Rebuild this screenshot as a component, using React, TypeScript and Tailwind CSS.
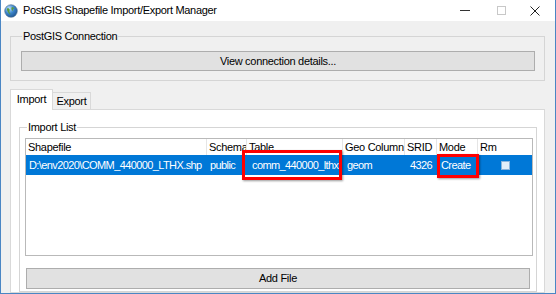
const font = { fontFamily: '"Liberation Sans", Arial, sans-serif' };

const Globe = () => (
  <svg width="14" height="14" viewBox="0 0 14 14">
    <defs>
      <radialGradient id="g" cx="0.35" cy="0.3" r="0.8">
        <stop offset="0" stopColor="#bfe3ff" />
        <stop offset="0.5" stopColor="#3b83c9" />
        <stop offset="1" stopColor="#1b4f8a" />
      </radialGradient>
    </defs>
    <circle cx="7" cy="7" r="6.3" fill="url(#g)" stroke="#4d6f8f" strokeWidth="0.6" />
    <path d="M3 4.5c1.2-.6 2.2 0 2.6 1 .3.9-.5 1.5-.2 2.4.3.8 1.2 1.3 1 2.3-.6.2-1.5-.6-2-1.5C3.8 7.6 2.6 6 3 4.5z" fill="#5a9a3c" />
    <path d="M8 3c1 .1 2.1.7 2.6 1.5-.5.4-1.2.1-1.6.6-.3.5.3 1.2-.2 1.6-.6.3-1-.6-1.2-1.2C7.4 4.8 7.4 3.7 8 3z" fill="#5a9a3c" />
  </svg>
);

const cols = ['Shapefile', 'Schema', 'Table', 'Geo Column', 'SRID', 'Mode', 'Rm'];

export default function App() {
  return (
    <div
      className="relative flex h-[294px] w-[556px] flex-col overflow-hidden border-x border-b border-[#4a86c4] bg-[#f0f0f0] text-[11px] tracking-[-0.3px] text-black"
      style={font}
    >
      {/* title bar */}
      <div className="flex h-[21px] shrink-0 items-center bg-white pl-[3px]">
        <Globe />
        <span className="ml-[5px] leading-none">PostGIS Shapefile Import/Export Manager</span>
        <div className="ml-auto flex h-full items-center">
          <div className="flex w-[36px] justify-center">
            <div className="h-px w-[10px] bg-[#333]" />
          </div>
          <div className="flex w-[36px] justify-center">
            <div className="h-[9px] w-[9px] border border-[#c8c8c8]" />
          </div>
          <div className="flex w-[36px] justify-center pr-[4px]">
            <svg width="10" height="10" viewBox="0 0 10 10">
              <path d="M0.5 0.5L9.5 9.5M9.5 0.5L0.5 9.5" stroke="#222" strokeWidth="1" />
            </svg>
          </div>
        </div>
      </div>

      {/* body */}
      <div className="flex flex-1 flex-col pl-[9px] pr-[10px]">
        <fieldset className="mt-[7px] border border-[#d5d5d5] pb-[9px] pl-[10px] pr-[9px]">
          <legend className="ml-[1px] px-[1px] leading-[16px]">PostGIS Connection</legend>
          <button className="mt-[7px] flex h-[20px] w-full items-center justify-center border border-[#adadad] bg-[#e1e1e1] leading-none">
            View connection details...
          </button>
        </fieldset>

        {/* tabs */}
        <div className="mt-[8px] flex items-end">
          <div className="relative z-10 -mb-px flex h-[21px] w-[43px] items-center justify-center border border-b-0 border-[#d9d9d9] bg-white pb-[2px]">
            Import
          </div>
          <div className="flex h-[17px] w-[38px] items-center justify-center border border-b-0 border-l-0 border-[#d9d9d9] bg-[#f0f0f0]">
            Export
          </div>
        </div>
        <div className="flex flex-1 flex-col border border-[#d9d9d9] bg-white pl-[8px] pr-[7px]">
          <fieldset className="mt-[9px] flex-1 border border-[#d5d5d5] pl-[5px] pr-[3px]">
            <legend className="ml-[2px] px-[1px] leading-[16px]">Import List</legend>
            <div className="relative mt-[3px] h-[118px] border border-[#b9b9b9] bg-white">
              <div className="grid h-[16px] grid-cols-[181px_40px_96px_62px_32px_41px_1fr] items-center">
                {cols.map((c) => (
                  <div
                    key={c}
                    className="h-full overflow-hidden whitespace-nowrap border-r border-[#e5e5e5] pl-[2px] leading-[16px] last:border-r-0"
                  >
                    {c}
                  </div>
                ))}
              </div>
              <div className="grid h-[20px] grid-cols-[181px_40px_96px_62px_32px_41px_1fr] items-center whitespace-nowrap bg-[#0078d7] tracking-[-0.6px] text-white">
                <div className="overflow-hidden pl-[3px]">D:\env2020\COMM_440000_LTHX.shp</div>
                <div className="overflow-hidden pl-[3px]">public</div>
                <div className="overflow-hidden pl-[5px]">comm_440000_lthx</div>
                <div className="overflow-hidden pl-[4px]">geom</div>
                <div className="overflow-hidden pr-[5px] text-right">4326</div>
                <div className="overflow-hidden pl-[4px]">Create</div>
                <div className="flex justify-center">
                  <div className="h-[9px] w-[9px] border border-[#8ab4dc] bg-[#e2eefa]" />
                </div>
              </div>
              {/* highlight boxes */}
              <div className="absolute left-[216px] top-[11px] h-[30px] w-[100px] border-[3px] border-[#ff0000] shadow-[1px_1px_2px_rgba(0,0,0,0.4)]" />
              <div className="absolute left-[411px] top-[15px] h-[24px] w-[42px] border-[3px] border-[#ff0000] shadow-[1px_1px_2px_rgba(0,0,0,0.4)]" />
            </div>
            <button className="ml-[1px] mr-[1px] mt-[12px] flex h-[21px] w-[504px] items-center justify-center border border-[#adadad] bg-[#e1e1e1] leading-none">
              Add File
            </button>
          </fieldset>
        </div>
      </div>
    </div>
  );
}
